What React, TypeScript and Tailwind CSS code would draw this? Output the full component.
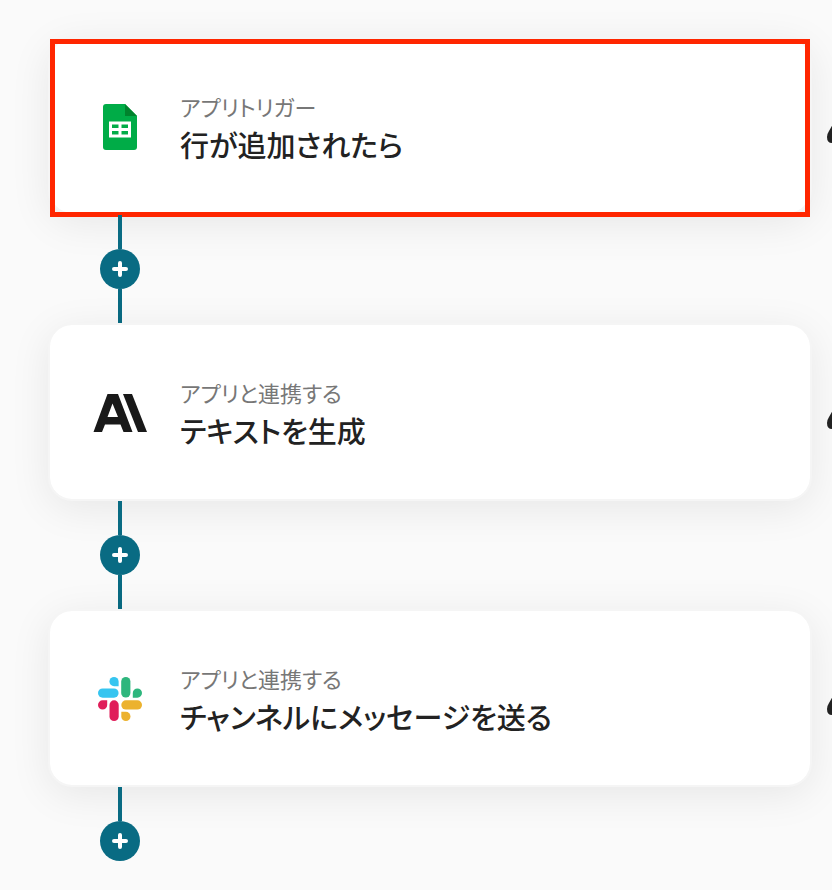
import type { ReactNode } from "react";

const steps: { id: string; kind: string; title: string; icon: ReactNode; selected?: boolean }[] = [
  { id: "trigger", kind: "アプリトリガー", title: "行が追加されたら", icon: <SheetsIcon />, selected: true },
  { id: "generate", kind: "アプリと連携する", title: "テキストを生成", icon: <AnthropicIcon /> },
  { id: "message", kind: "アプリと連携する", title: "チャンネルにメッセージを送る", icon: <SlackIcon /> },
];

function SheetsIcon() {
  return (
    <svg viewBox="0 0 34 46" className="h-[46px] w-[34px]" aria-hidden="true">
      <path d="M3 0H22L34 12V43a3 3 0 0 1-3 3H3a3 3 0 0 1-3-3V3a3 3 0 0 1 3-3Z" fill="#00ac47" />
      <path d="M22 0 34 12H22Z" fill="#00832d" />
      <path
        d="M6 17.500H28V33.500H6ZM9 20.500V24H15.500V20.500ZM18.500 20.500V24H25V20.500ZM9 27V30.500H15.500V27ZM18.500 27V30.500H25V27Z"
        fill="#fff"
        fillRule="evenodd"
      />
    </svg>
  );
}

function AnthropicIcon() {
  return (
    <svg viewBox="0 0 54 38" className="h-[38px] w-[54px]" aria-hidden="true">
      <path
        d="M14.500 0H25L39.500 38H30.500L27.500 30.500H12L9 38H0.500ZM19.500 9.500 14.500 23H25Z"
        fill="#191919"
        fillRule="evenodd"
      />
      <path d="M30 0H39L54 38H45Z" fill="#191919" />
    </svg>
  );
}

function SlackIcon() {
  return (
    <svg viewBox="0 0 44 44" className="size-11" aria-hidden="true">
      <path d="M16 0a4.600 4.600 0 0 1 4.600 4.600V9.200H16A4.600 4.600 0 0 1 16 0Z" fill="#36c5f0" />
      <rect x="0" y="11.500" width="20.600" height="9.200" rx="4.600" fill="#36c5f0" />
      <rect x="23.200" y="0" width="9.200" height="20.600" rx="4.600" fill="#2eb67d" />
      <path d="M44 16.100a4.600 4.600 0 0 1-4.600 4.600H34.800V16.100a4.600 4.600 0 0 1 9.200 0Z" fill="#2eb67d" />
      <path d="M0 27.900a4.600 4.600 0 0 1 4.600-4.600H9.200v4.600a4.600 4.600 0 0 1-9.200 0Z" fill="#e01e5a" />
      <rect x="11.500" y="23.300" width="9.200" height="20.700" rx="4.600" fill="#e01e5a" />
      <rect x="23.300" y="23.300" width="20.700" height="9.200" rx="4.600" fill="#ecb22e" />
      <path d="M23.300 34.800h4.600a4.600 4.600 0 1 1-4.600 4.600Z" fill="#ecb22e" />
    </svg>
  );
}

function EditIcon() {
  return (
    <svg viewBox="0 0 40 40" className="size-10" aria-hidden="true">
      <path d="M7 18 3 25Q1 28 1 31 1 37 6 37L16 34 38 11 29 2Z" fill="#222" />
    </svg>
  );
}

function AddButton() {
  return (
    <button
      type="button"
      aria-label="ステップを追加"
      className="flex size-10 items-center justify-center rounded-full bg-[#096b83] text-white"
    >
      <svg viewBox="0 0 16 16" className="size-4" aria-hidden="true">
        <path d="M8 2V14M2 8H14" stroke="currentColor" strokeWidth="4" strokeLinecap="round" />
      </svg>
    </button>
  );
}

export default function App() {
  return (
    <main className="min-h-screen overflow-hidden bg-[#fafafa] pt-[37px] pr-5 pb-[29px] pl-12 font-['Noto_Sans_CJK_JP',sans-serif] text-[#222] [font-feature-settings:'palt']">
      <ol>
        {steps.map((step, i) => (
          <li key={step.id}>
            <div className="relative flex items-center">
              <section className="flex h-[178px] min-w-0 flex-1 items-center rounded-3xl border-2 border-[#f5f5f5] bg-white bg-clip-padding pt-0.5 pl-10 shadow-[0_8px_40px_rgba(0,0,0,0.08)]">
                <div className="flex w-15 shrink-0 justify-center">{step.icon}</div>
                <div className="ml-[30px] pt-0.5">
                  <p className="text-[22px] leading-8 text-[#777]">{step.kind}</p>
                  <h2 className="text-[29px] leading-11 font-medium">{step.title}</h2>
                </div>
              </section>
              <button type="button" aria-label="編集" className="-mr-[54px] ml-3.5 shrink-0">
                <EditIcon />
              </button>
              {step.selected && (
                <div className="pointer-events-none absolute -bottom-0.5 left-0.5 right-0.5 top-0.5 border-5 border-[#ff2600]" />
              )}
            </div>
            <div className="relative flex w-36 flex-col items-center">
              <div className="h-[34px] w-1 bg-[#096b83]" />
              <AddButton />
              {i < steps.length - 1 && <div className="h-[34px] w-1 bg-[#096b83]" />}
            </div>
          </li>
        ))}
      </ol>
    </main>
  );
}
